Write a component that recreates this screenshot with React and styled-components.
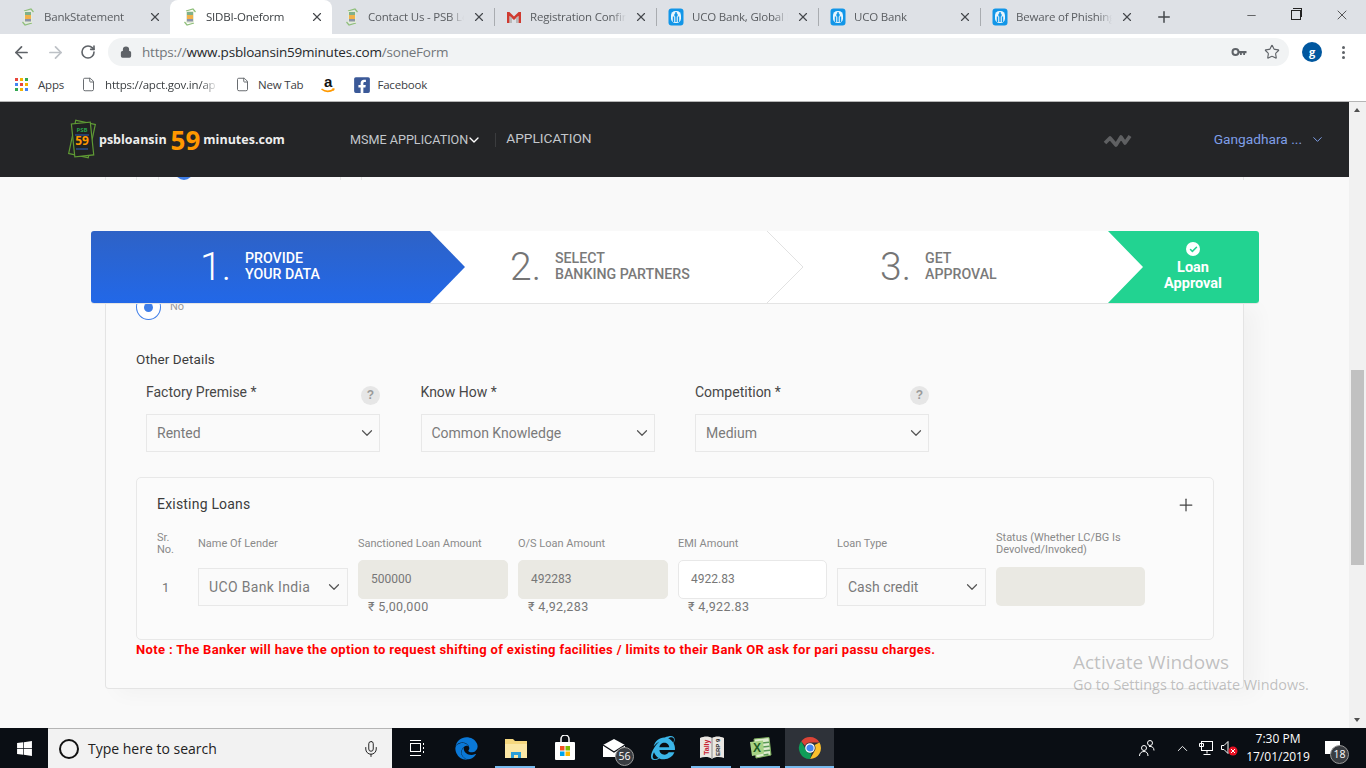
import React from 'react'
import styled, { createGlobalStyle } from 'styled-components'
import { ArrowLeft, ArrowRight, RotateCw, Lock, Star, X, Plus, Minus, ChevronDown, File, Mic, Check } from 'lucide-react'
import { FaWindows, FaFacebookSquare, FaEdge, FaInternetExplorer } from 'react-icons/fa'

const tabs = [
    { title: 'BankStatement', icon: 'psb' },
    { title: 'SIDBI-Oneform', icon: 'psb', active: true },
    { title: 'Contact Us - PSB Loans in 59', icon: 'psb' },
    { title: 'Registration Confirmation', icon: 'gmail', divider: true },
    { title: 'UCO Bank, Global Banking', icon: 'uco', divider: true },
    { title: 'UCO Bank', icon: 'uco', divider: true },
    { title: 'Beware of Phishing Attacks', icon: 'uco', divider: true },
]

const PsbIcon = () => (
    <svg width="16" height="18" viewBox="0 0 16 18">
        <path d="M4 3l7-2 2.500 3M12 15l-7 2-2.500-3" stroke="#8fbf7a" strokeWidth="1.200" fill="none" />
        <rect x="4" y="3" width="8" height="12" rx="1" fill="#e4ecd8" />
        <rect x="5" y="4" width="6" height="3" fill="#7fb08a" />
        <rect x="5" y="7" width="6" height="4" fill="#f2b14a" />
        <rect x="5" y="11" width="6" height="2.500" fill="#8b93a8" />
    </svg>
)

const GmailIcon = () => (
    <svg width="16" height="16" viewBox="0 0 16 16">
        <path d="M1 3h2.400L8 7.400 12.600 3H15v11h-2.600V7L8 11 3.600 7v7H1z" fill="#cf3a30" />
        <path d="M3.600 7v7H6V9z M12.400 7v7H10V9z" fill="#b9b9b9" />
    </svg>
)

const UcoIcon = () => (
    <svg width="16" height="18" viewBox="0 0 16 18">
        <rect x="0.500" y="0.500" width="15" height="17" rx="3" fill="#1296e8" />
        <rect x="3" y="3" width="10" height="12" rx="4.500" fill="#e9f6fd" />
        <path d="M8 4v10M5.500 14V8.500M10.500 14V8.500" stroke="#1296e8" strokeWidth="1.400" fill="none" />
        <circle cx="8" cy="7" r="1.800" fill="#1296e8" />
    </svg>
)

const tabIcons = { psb: <PsbIcon />, gmail: <GmailIcon />, uco: <UcoIcon /> }

const AppsIcon = () => {
    const colors = ['#e8453c', '#f4b400', '#34a853', '#4285f4', '#e8453c', '#f4b400', '#34a853', '#f4b400', '#4285f4']
    return (
        <svg width="13" height="13" viewBox="0 0 13 13">
            {colors.map((c, i) => (
                <rect key={i} x={(i % 3) * 5} y={Math.floor(i / 3) * 5} width="3" height="3" fill={c} />
            ))}
        </svg>
    )
}

const AmazonIcon = () => (
    <svg width="16" height="20" viewBox="0 0 16 20">
        <text x="8" y="12" textAnchor="middle" fontFamily="Liberation Sans" fontWeight="700" fontSize="15" fill="#111">a</text>
        <path d="M1.500 14c3.500 2.800 8.500 2.800 12.500.3" stroke="#f90" strokeWidth="1.600" fill="none" />
        <path d="M12 13.200l2.800.4-1 2.400z" fill="#f90" />
    </svg>
)

const KeyIcon = () => (
    <svg width="16" height="10" viewBox="0 0 16 10">
        <circle cx="4.500" cy="5" r="3" fill="none" stroke="#5f6368" strokeWidth="2" />
        <path d="M7 4h8.500v2.200H14V8h-1.800V6.200h-1.400V8H9V6.200H7z" fill="#5f6368" />
    </svg>
)

const Logo = () => (
    <svg width="30" height="46" viewBox="0 0 30 46">
        <rect x="5" y="5" width="20" height="34" fill="none" stroke="#5f9a34" strokeWidth="1.200" transform="rotate(12 15 22)" />
        <rect x="6" y="6" width="19" height="33" fill="#202122" stroke="#5f9a34" strokeWidth="1.200" transform="rotate(-6 15 22)" />
        <text x="15" y="15" textAnchor="middle" fontFamily="Open Sans" fontWeight="700" fontSize="6" fill="#2aa04a">PSB</text>
        <rect x="8" y="17" width="14" height="2" fill="#27406e" />
        <text x="15" y="28" textAnchor="middle" fontFamily="Open Sans" fontWeight="700" fontSize="12" fill="#ff9800">59</text>
        <rect x="9" y="31" width="12" height="2" fill="#27406e" />
    </svg>
)

const WaveIcon = () => (
    <svg width="30" height="16" viewBox="0 0 30 16">
        <path d="M2 11l5-5 6 7 5-8 4 6 5-7" stroke="#5f6062" strokeWidth="3.600" fill="none" strokeLinejoin="round" />
    </svg>
)

const ChromeLogo = () => (
    <svg width="24" height="24" viewBox="0 0 24 24">
        <path d="M12 1a11 11 0 0 1 9.500 5.500H12a5.500 5.500 0 0 0-5 3.200L3.200 5.300A11 11 0 0 1 12 1z" fill="#db4437" />
        <path d="M21.500 6.500A11 11 0 0 1 12 23l4.700-8.200a5.500 5.500 0 0 0-.1-5.800z" fill="#fbc02d" />
        <path d="M3.200 5.300L7.900 13.700a5.500 5.500 0 0 0 5.600 3.600L12 23A11 11 0 0 1 3.200 5.300z" fill="#0f9d58" />
        <circle cx="12" cy="12" r="4.200" fill="#4285f4" stroke="#fff" strokeWidth="1.200" />
    </svg>
)

const ExplorerIcon = () => (
    <svg width="24" height="22" viewBox="0 0 24 22">
        <path d="M1 2h8l2 2h12v17H1z" fill="#f5d77f" />
        <rect x="1" y="7" width="22" height="14" fill="#fbe7a6" />
        <path d="M7 21v-6h10v6h-3v-3h-4v3z" fill="#2b9fd9" />
    </svg>
)

const StoreIcon = () => (
    <svg width="22" height="26" viewBox="0 0 22 26">
        <path d="M7 7V4a4 4 0 0 1 8 0v3" stroke="#fff" strokeWidth="1.500" fill="none" />
        <rect x="1" y="7" width="20" height="18" rx="1" fill="#fff" />
        <rect x="6" y="11" width="4.500" height="4.500" fill="#f25022" />
        <rect x="11.500" y="11" width="4.500" height="4.500" fill="#7fba00" />
        <rect x="6" y="16.500" width="4.500" height="4.500" fill="#00a4ef" />
        <rect x="11.500" y="16.500" width="4.500" height="4.500" fill="#ffb900" />
    </svg>
)

const MailIcon = () => (
    <svg width="24" height="20" viewBox="0 0 24 20">
        <path d="M1 7l11-6 11 6v12H1z" fill="#fff" />
        <path d="M1 7l11 7 11-7" stroke="#0a0e14" strokeWidth="1.300" fill="none" />
    </svg>
)

const TallyIcon = () => (
    <svg width="26" height="26" viewBox="0 0 26 26">
        <path d="M1 3c4-2 9-2 12 0 3-2 8-2 12 0v20c-4-1.500-9-1.500-12 1-3-2.500-8-2.500-12-1z" fill="#e9e6e2" />
        <path d="M13 3v21" stroke="#8a8a8a" />
        <text transform="translate(9.500 20) rotate(-90)" fontFamily="Liberation Sans" fontWeight="700" fontSize="7" fill="#c8202f">Tally</text>
        <text transform="translate(20.500 21) rotate(-90)" fontFamily="Liberation Sans" fontWeight="700" fontSize="6" fill="#222">ERP 9</text>
    </svg>
)

const ExcelIcon = () => (
    <svg width="24" height="24" viewBox="0 0 24 24">
        <path d="M5 3l15-1.500 2 17.500-15 3z" fill="#dfeccf" stroke="#7cae5c" />
        <path d="M13 7l7-.7M13.500 11l7-.7M14 15l7-.7M14.500 19l5-.7" stroke="#5a9a57" strokeWidth="1.500" />
        <path d="M1 6l13-1.500 1 13L3 20z" fill="#a6d285" />
        <text x="8" y="16" textAnchor="middle" fontFamily="Liberation Sans" fontWeight="700" fontSize="12" fill="#1d5c24">X</text>
    </svg>
)

const TaskViewIcon = () => (
    <svg width="16" height="18" viewBox="0 0 16 18" fill="none" stroke="#fff" strokeWidth="1">
        <rect x="1.500" y="4.500" width="10" height="8" />
        <path d="M1 1.500h11M1 16.500h11M14.500 4v2M14.500 8v2M14.500 12v2" />
    </svg>
)

const PeopleIcon = () => (
    <svg width="18" height="18" viewBox="0 0 18 18" fill="none" stroke="#fff" strokeWidth="1">
        <circle cx="6" cy="9" r="2.500" />
        <path d="M1.500 17c0-3 2-4.500 4.500-4.500s4 1.500 4 4.500" />
        <circle cx="12" cy="4" r="2.500" />
        <path d="M11 7.500c3-.5 5 1 5 4" />
    </svg>
)

const NetworkIcon = () => (
    <svg width="16" height="16" viewBox="0 0 16 16" fill="none" stroke="#fff" strokeWidth="1">
        <rect x="3.500" y="1.500" width="11" height="9" />
        <path d="M9 10.500v3M5.500 14.500h7M1.500 3.500h4v3h-4z" />
    </svg>
)

const VolumeIcon = () => (
    <svg width="20" height="18" viewBox="0 0 20 18">
        <path d="M1.500 6.500h2.500l4-4v12l-4-4H1.500z" fill="none" stroke="#fff" />
        <circle cx="13" cy="12" r="4.500" fill="#e81123" />
        <path d="M11 10l4 4M15 10l-4 4" stroke="#fff" />
    </svg>
)

const Select = ({ value, compact, wide }) => (
    <SelectBox $compact={compact} $wide={wide}>
        <span>{value}</span>
        <ChevronDown size={18} strokeWidth={1.6} color="#555" />
    </SelectBox>
)

const Field = ({ label, value, help }) => (
    <div>
        <FieldHead>
            <FieldLabel>{label}</FieldLabel>
            {help && <HelpBadge>?</HelpBadge>}
        </FieldHead>
        <Select value={value} />
    </div>
)

const Step = ({ num, top, bottom, active, width, pad, arrow }) => (
    <StepBox $active={active} $width={width} $pad={pad}>
        <StepNum>{num}.</StepNum>
        <StepLabel $active={active}>{top}<br />{bottom}</StepLabel>
        {arrow && (
            <StepArrow width="38" height="72" viewBox="0 0 38 72">
                <path d="M1 0l36 36L1 72" fill="none" stroke="#e2e2e2" />
            </StepArrow>
        )}
    </StepBox>
)

const App = () => {
    return (
        <Screen>
            <GlobalStyle />
            <TabStrip>
                {tabs.map((tab) => (
                    <Tab key={tab.title} $active={tab.active} $divider={tab.divider}>
                        <TabIcon>{tabIcons[tab.icon]}</TabIcon>
                        <TabTitle>{tab.title}</TabTitle>
                        <X size={14} strokeWidth={2} color="#45484c" />
                    </Tab>
                ))}
                <NewTab><Plus size={18} strokeWidth={2} /></NewTab>
                <WindowControls>
                    <Minus size={13} strokeWidth={1.2} />
                    <RestoreIcon />
                    <X size={16} strokeWidth={1.1} />
                </WindowControls>
            </TabStrip>

            <Toolbar>
                <NavIcons>
                    <ArrowLeft size={19} color="#5f6368" strokeWidth={2.2} />
                    <ArrowRight size={19} color="#bdc1c6" strokeWidth={2.2} />
                    <RotateCw size={16} color="#5f6368" strokeWidth={2.4} />
                </NavIcons>
                <Omnibox>
                    <Lock size={12} color="#5f6368" fill="#5f6368" strokeWidth={2.5} />
                    <Url>https://<b>www.psbloansin59minutes.com</b>/soneForm</Url>
                    <OmniRight>
                        <KeyIcon />
                        <Star size={16} color="#5f6368" strokeWidth={1.7} />
                    </OmniRight>
                </Omnibox>
                <Avatar>g</Avatar>
                <MenuDots><i /><i /><i /></MenuDots>
            </Toolbar>

            <Bookmarks>
                <Bookmark $gap={10}><AppsIcon />Apps</Bookmark>
                <Bookmark $gap={9}><File size={15} strokeWidth={1.5} color="#5f6368" /><FadeText>https://apct.gov.in/ap</FadeText></Bookmark>
                <Bookmark $gap={8}><File size={15} strokeWidth={1.5} color="#5f6368" />New Tab</Bookmark>
                <Bookmark $gap={0}><AmazonIcon /></Bookmark>
                <Bookmark $gap={6}><FaFacebookSquare size={18} color="#3b5998" />Facebook</Bookmark>
            </Bookmarks>

            <Viewport>
                <Page>
                    <SiteHeader>
                        <Brand>
                            <Logo />
                            <BrandText>psbloansin</BrandText>
                            <BrandNum>59</BrandNum>
                            <BrandText>minutes.com</BrandText>
                        </Brand>
                        <NavItem>MSME APPLICATION</NavItem>
                        <NavChevron><ChevronDown size={16} color="#fff" strokeWidth={2} /></NavChevron>
                        <NavDivider />
                        <NavItem $large>APPLICATION</NavItem>
                        <HeaderRight>
                            <WaveIcon />
                            <UserName>Gangadhara ...</UserName>
                            <ChevronDown size={15} color="#7f9fe8" strokeWidth={1.6} />
                        </HeaderRight>
                    </SiteHeader>

                    <ScrolledEdge><EdgeDot /></ScrolledEdge>

                    <Stepper>
                        <Step num="1" top="PROVIDE" bottom="YOUR DATA" active width={374} pad={109} />
                        <Step num="2" top="SELECT" bottom="BANKING PARTNERS" width={338} pad={45} arrow />
                        <Step num="3" top="GET" bottom="APPROVAL" width={340} pad={77} />
                        <ApprovalStep>
                            <CheckDot><Check size={9} strokeWidth={4} color="#22d391" /></CheckDot>
                            <span>Loan<br />Approval</span>
                        </ApprovalStep>
                    </Stepper>

                    <Card>
                        <RadioRow>
                            <RadioOuter><RadioDot /></RadioOuter>
                            <RadioText>No</RadioText>
                        </RadioRow>
                        <SectionTitle>Other Details</SectionTitle>
                        <FieldGrid>
                            <Field label="Factory Premise *" value="Rented" help />
                            <Field label="Know How *" value="Common Knowledge" />
                            <Field label="Competition *" value="Medium" help />
                        </FieldGrid>

                        <LoansBox>
                            <LoansHead>
                                <LoansTitle>Existing Loans</LoansTitle>
                                <Plus size={20} strokeWidth={1.5} color="#444" />
                            </LoansHead>
                            <LoansGrid>
                                <ColHead>Sr.<br />No.</ColHead>
                                <ColHead>Name Of Lender</ColHead>
                                <ColHead>Sanctioned Loan Amount</ColHead>
                                <ColHead>O/S Loan Amount</ColHead>
                                <ColHead>EMI Amount</ColHead>
                                <ColHead>Loan Type</ColHead>
                                <ColHead>Status (Whether LC/BG Is Devolved/Invoked)</ColHead>

                                <SrNo>1</SrNo>
                                <SelectCell><Select value="UCO Bank India" compact wide /></SelectCell>
                                <div>
                                    <AmountInput $locked>500000</AmountInput>
                                    <AmountHint>₹ 5,00,000</AmountHint>
                                </div>
                                <div>
                                    <AmountInput $locked>492283</AmountInput>
                                    <AmountHint>₹ 4,92,283</AmountHint>
                                </div>
                                <div>
                                    <AmountInput>4922.83</AmountInput>
                                    <AmountHint>₹ 4,922.83</AmountHint>
                                </div>
                                <SelectCell><Select value="Cash credit" compact /></SelectCell>
                                <SelectCell><StatusInput /></SelectCell>
                            </LoansGrid>
                        </LoansBox>
                        <Note>Note : The Banker will have the option to request shifting of existing facilities / limits to their Bank OR ask for pari passu charges.</Note>
                    </Card>
                </Page>

                <Scrollbar>
                    <ScrollArrow $up />
                    <ScrollThumb />
                    <ScrollArrow />
                </Scrollbar>

                <Watermark>
                    <strong>Activate Windows</strong>
                    <span>Go to Settings to activate Windows.</span>
                </Watermark>
            </Viewport>

            <Taskbar>
                <StartButton><FaWindows size={17} color="#fff" /></StartButton>
                <SearchBox>
                    <Cortana />
                    <SearchText>Type here to search</SearchText>
                    <Mic size={18} strokeWidth={1.3} color="#222" />
                </SearchBox>
                <TaskIcons>
                    <TaskIcon $first><TaskViewIcon /></TaskIcon>
                    <TaskIcon><FaEdge size={23} color="#0a78d7" /></TaskIcon>
                    <TaskIcon $open><ExplorerIcon /></TaskIcon>
                    <TaskIcon><StoreIcon /></TaskIcon>
                    <TaskIcon><MailIcon /><CountBadge>56</CountBadge></TaskIcon>
                    <TaskIcon><FaInternetExplorer size={24} color="#3bb5e8" /></TaskIcon>
                    <TaskIcon $open><TallyIcon /></TaskIcon>
                    <TaskIcon $open><ExcelIcon /></TaskIcon>
                    <TaskIcon $open $current><ChromeLogo /></TaskIcon>
                </TaskIcons>
                <Tray>
                    <PeopleIcon />
                    <TrayCaret><ChevronDown size={17} color="#fff" strokeWidth={1.3} /></TrayCaret>
                    <TrayPair>
                        <NetworkIcon />
                        <VolumeIcon />
                    </TrayPair>
                    <Clock>7:30 PM<br />17/01/2019</Clock>
                    <Notify>
                        <NotifyGlyph />
                        <CountBadge $tray>18</CountBadge>
                    </Notify>
                </Tray>
            </Taskbar>
        </Screen>
    )
}

const GlobalStyle = createGlobalStyle`
    html, body {
        margin: 0;
        padding: 0;
        overflow: hidden;
    }
    * {
        box-sizing: border-box;
    }
`

const Screen = styled.div`
    width: 1366px;
    height: 768px;
    display: flex;
    flex-direction: column;
    overflow: hidden;
    font-family: 'Roboto', 'Liberation Sans', sans-serif;
    background: #fff;
`

const TabStrip = styled.div`
    height: 34px;
    flex: none;
    display: flex;
    padding-left: 8px;
    background: #dee1e6;
`

const Tab = styled.div`
    width: 162px;
    display: flex;
    align-items: center;
    padding: 0 8px 0 12px;
    color: ${(p) => (p.$active ? '#3c4043' : '#5a5d61')};
    background: ${(p) => (p.$active ? '#fff' : 'transparent')};
    border-radius: ${(p) => (p.$active ? '8px 8px 0 0' : '0')};
    position: relative;

    &::before {
        content: '';
        display: ${(p) => (p.$divider ? 'block' : 'none')};
        position: absolute;
        left: 0;
        top: 8px;
        bottom: 8px;
        width: 1px;
        background: #a9acb0;
    }
`

const TabIcon = styled.span`
    width: 16px;
    height: 18px;
    flex: none;
    margin-right: 8px;
    display: flex;
    align-items: center;
`

const TabTitle = styled.span`
    flex: 1;
    min-width: 0;
    margin: -2px 8px 0 0;
    font: 11.500px 'Open Sans', sans-serif;
    letter-spacing: -0.2px;
    white-space: nowrap;
    overflow: hidden;
    -webkit-mask-image: linear-gradient(to right, #000 85%, transparent 100%);
    mask-image: linear-gradient(to right, #000 85%, transparent 100%);
`

const NewTab = styled.div`
    width: 44px;
    display: flex;
    align-items: center;
    justify-content: center;
    color: #45484c;
`

const WindowControls = styled.div`
    margin-left: auto;
    width: 138px;
    height: 30px;
    display: flex;
    align-items: center;
    justify-content: space-around;
    color: #222;
`

const RestoreIcon = styled.span`
    width: 10px;
    height: 10px;
    border: 1px solid #222;
    position: relative;
    &::after {
        content: '';
        position: absolute;
        left: 1px;
        top: -3px;
        width: 8px;
        height: 8px;
        border: 1px solid #222;
        border-left: 0;
        border-bottom: 0;
    }
`

const Toolbar = styled.div`
    height: 34px;
    flex: none;
    display: flex;
    align-items: center;
    background: #fff;
    padding-top: 2px;
`

const NavIcons = styled.div`
    width: 108px;
    padding: 0 12px;
    display: flex;
    align-items: center;
    justify-content: space-between;
`

const Omnibox = styled.div`
    width: 1181px;
    height: 28px;
    display: flex;
    align-items: center;
    padding-left: 12px;
    background: #f1f3f4;
    border-radius: 14px;
`

const Url = styled.div`
    margin-left: 10px;
    font: 13.500px 'Open Sans', sans-serif;
    letter-spacing: -0.2px;
    color: #72767a;

    b {
        font-weight: 400;
        color: #26282b;
    }
`

const OmniRight = styled.div`
    margin-left: auto;
    width: 49px;
    margin-right: 9px;
    display: flex;
    align-items: center;
    justify-content: space-between;
`

const Avatar = styled.div`
    width: 20px;
    height: 20px;
    margin-left: 13px;
    border-radius: 50%;
    background: #00579f;
    color: #fff;
    font: 700 11px/19px 'Open Sans', sans-serif;
    text-align: center;
`

const MenuDots = styled.div`
    margin-left: 20px;
    display: flex;
    flex-direction: column;
    gap: 2px;

    i {
        width: 3px;
        height: 3px;
        border-radius: 50%;
        background: #5f6368;
    }
`

const Bookmarks = styled.div`
    height: 34px;
    flex: none;
    display: flex;
    align-items: center;
    padding-left: 15px;
    background: #fff;
    border-bottom: 1px solid #b5b5b5;
    gap: 17px;
`

const Bookmark = styled.div`
    display: flex;
    align-items: center;
    gap: ${(p) => p.$gap}px;
    font: 11.500px 'Open Sans', sans-serif;
    letter-spacing: -0.2px;
    color: #3c4043;
`

const FadeText = styled.span`
    width: 113px;
    white-space: nowrap;
    overflow: hidden;
    -webkit-mask-image: linear-gradient(to right, #000 85%, transparent 100%);
    mask-image: linear-gradient(to right, #000 85%, transparent 100%);
`

const Viewport = styled.div`
    flex: 1;
    min-height: 0;
    display: flex;
    position: relative;
    background: #f9f9f9;
`

const Page = styled.div`
    flex: 1;
    min-width: 0;
    overflow: hidden;
`

const SiteHeader = styled.div`
    height: 75px;
    display: flex;
    align-items: center;
    padding: 0 24px 0 67px;
    background: #242527;
`

const Brand = styled.div`
    width: 283px;
    display: flex;
    align-items: center;
`

const BrandText = styled.span`
    font: 700 12.500px 'Open Sans', sans-serif;
    color: #eee;
    margin-left: 2px;
`

const BrandNum = styled.span`
    font: 700 26px 'Open Sans', sans-serif;
    color: #ff9800;
    margin: 0 1px 0 4px;
`

const NavItem = styled.span`
    font-size: ${(p) => (p.$large ? '13.700px' : '12.600px')};
    color: #c3c7cc;
    white-space: nowrap;
    margin-top: ${(p) => (p.$large ? '-3px' : '0')};
`

const NavChevron = styled.span`
    display: flex;
    margin: 1px 0 0 -2px;
`

const NavDivider = styled.span`
    width: 1px;
    height: 14px;
    margin: 0 10px 0 13px;
    background: #3b3c3e;
`

const HeaderRight = styled.div`
    margin-left: auto;
    display: flex;
    align-items: center;
`

const UserName = styled.span`
    margin: -2px 8px 0 81px;
    font-size: 13.700px;
    color: #7f9fe8;
`

const ScrolledEdge = styled.div`
    height: 3px;
    margin-left: 105px;
    width: 1139px;
    position: relative;
    overflow: hidden;
    border-left: 1px solid #e6e6e6;
    border-right: 1px solid #e6e6e6;
    background:
        linear-gradient(#e6e6e6, #e6e6e6) 30px 0 / 1px 100% no-repeat,
        linear-gradient(#e6e6e6, #e6e6e6) 52px 0 / 1px 100% no-repeat,
        linear-gradient(#e6e6e6, #e6e6e6) 234px 0 / 1px 100% no-repeat,
        linear-gradient(#e6e6e6, #e6e6e6) 255px 0 / 1px 100% no-repeat;
`

const EdgeDot = styled.span`
    position: absolute;
    left: 69px;
    top: -9px;
    width: 18px;
    height: 12px;
    border-radius: 0 0 9px 9px;
    background: #3f7ee8;
`

const Stepper = styled.div`
    position: relative;
    z-index: 2;
    width: 1168px;
    height: 72px;
    margin: 51px 0 0 91px;
    display: flex;
    background: #fff;
    border-radius: 3px;
    box-shadow: 0 1px 0 #e4e4e4;
`

const StepBox = styled.div`
    flex: none;
    width: ${(p) => p.$width}px;
    height: 72px;
    display: flex;
    align-items: center;
    gap: 14px;
    padding-left: ${(p) => p.$pad}px;
    position: relative;
    border-radius: ${(p) => (p.$active ? '3px 0 0 3px' : '0')};
    color: ${(p) => (p.$active ? '#fff' : '#757575')};
    background: ${(p) => (p.$active ? 'linear-gradient(#2e62c6, #2268e8)' : 'transparent')};
    clip-path: ${(p) => (p.$active ? 'polygon(0 0, 339px 0, 100% 50%, 339px 100%, 0 100%)' : 'none')};
`

const StepNum = styled.span`
    font-size: 39px;
    font-weight: 300;
    line-height: 1;
`

const StepLabel = styled.span`
    margin-top: -2px;
    font-size: 14.200px;
    font-weight: 500;
    line-height: 16px;
    color: ${(p) => (p.$active ? '#fff' : '#7a7a7a')};
`

const StepArrow = styled.svg`
    position: absolute;
    right: -1px;
    top: 0;
`

const ApprovalStep = styled.div`
    flex: none;
    width: 151px;
    height: 72px;
    margin-left: -35px;
    padding: 11px 0 0 19px;
    display: flex;
    flex-direction: column;
    align-items: center;
    background: #22d391;
    border-radius: 0 3px 3px 0;
    clip-path: polygon(0 0, 100% 0, 100% 100%, 0 100%, 35px 50%);
    color: #fff;
    font-size: 14.500px;
    font-weight: 700;
    line-height: 16px;
    text-align: center;
`

const CheckDot = styled.span`
    width: 14px;
    height: 14px;
    margin-bottom: 4px;
    border-radius: 50%;
    background: #fff;
    display: flex;
    align-items: center;
    justify-content: center;
`

const Card = styled.div`
    display: flow-root;
    width: 1139px;
    height: 386px;
    margin-left: 105px;
    padding: 0 29px 0 30px;
    background: #fafafa;
    border: 1px solid #e4e4e4;
    border-top: 0;
    border-radius: 0 0 4px 4px;
    box-shadow: 12px 4px 22px rgba(0, 0, 0, 0.035);
`

const RadioRow = styled.div`
    display: flex;
    align-items: center;
    gap: 9px;
    margin-top: -9px;
`

const RadioOuter = styled.span`
    width: 25px;
    height: 26px;
    border-radius: 50%;
    border: 1px solid #3f7ee8;
    background: #fff;
    display: flex;
    align-items: center;
    justify-content: center;
`

const RadioDot = styled.span`
    width: 9px;
    height: 9px;
    border-radius: 50%;
    background: #3f7ee8;
`

const RadioText = styled.span`
    font-size: 11px;
    color: #9a9a9a;
    margin-top: -2px;
`

const SectionTitle = styled.div`
    margin-top: 30px;
    font-size: 13.500px;
    line-height: 18px;
    letter-spacing: 0.1px;
    color: #3c3c3c;
`

const FieldGrid = styled.div`
    margin-top: 13px;
    padding-left: 10px;
    display: grid;
    grid-template-columns: repeat(3, 234px);
    column-gap: 40.500px;
`

const FieldHead = styled.div`
    height: 33px;
    display: flex;
    justify-content: space-between;
    align-items: flex-start;
`

const FieldLabel = styled.span`
    font-size: 14px;
    line-height: 22px;
    color: #474747;
`

const HelpBadge = styled.span`
    width: 19px;
    height: 19px;
    margin-top: 5px;
    border-radius: 50%;
    background: #e6e6e6;
    color: #9a9a9a;
    font: 700 12px/19px 'Liberation Sans', sans-serif;
    text-align: center;
`

const SelectBox = styled.div`
    height: 38px;
    display: flex;
    align-items: center;
    justify-content: space-between;
    padding: ${(p) => (p.$compact ? '0 4px 0 10px' : '0 3px 0 10px')};
    border: 1px solid #e8e8e8;
    font-size: 14px;
    letter-spacing: ${(p) => (p.$wide ? '0.35px' : '0')};
    color: #7a7a7a;
    background: #fafafa;
`

const LoansBox = styled.div`
    height: 163px;
    margin-top: 25px;
    padding: 16px 20px 0;
    background: #fbfbfb;
    border: 1px solid #e8e8e8;
    border-radius: 5px;
`

const LoansHead = styled.div`
    display: flex;
    justify-content: space-between;
    align-items: center;
    height: 20px;
    margin-right: -3px;

    svg {
        margin-top: 2px;
    }
`

const LoansTitle = styled.span`
    font-size: 14px;
    letter-spacing: 0.2px;
    color: #3c3c3c;
`

const LoansGrid = styled.div`
    margin-top: 18px;
    display: grid;
    grid-template-columns: 31px 150px 150px 150px 149px 149px 149px;
    grid-template-rows: 24px auto;
    column-gap: 10px;
    row-gap: 4px;
`

const ColHead = styled.div`
    align-self: center;
    font-size: 11px;
    line-height: 12px;
    color: #8a8a8a;
`

const SrNo = styled.div`
    padding: 20px 0 0 5px;
    font-size: 13px;
    color: #777;
`

const SelectCell = styled.div`
    padding-top: 8px;
`

const AmountInput = styled.div`
    height: 39px;
    padding-left: 12px;
    border-radius: 5px;
    font-size: 12px;
    line-height: 36px;
    color: #777;
    background: ${(p) => (p.$locked ? '#eae9e3' : '#fff')};
    border: 1px solid ${(p) => (p.$locked ? '#eae9e3' : '#e8e8e8')};
`

const AmountHint = styled.div`
    padding-left: 10px;
    font-size: 12.500px;
    line-height: 16px;
    letter-spacing: 0.4px;
    color: #777;
`

const StatusInput = styled.div`
    height: 39px;
    margin-top: -1px;
    border-radius: 5px;
    background: #eae9e3;
`

const Note = styled.div`
    margin-top: 1px;
    font-size: 13px;
    font-weight: 700;
    line-height: 18px;
    letter-spacing: 0.345px;
    white-space: nowrap;
    color: #fe0000;
`

const Scrollbar = styled.div`
    width: 17px;
    flex: none;
    background: #f1f1f1;
    position: relative;
`

const ScrollThumb = styled.div`
    position: absolute;
    left: 2px;
    top: 268px;
    width: 13px;
    height: 195px;
    background: #c1c1c1;
`

const ScrollArrow = styled.div`
    position: absolute;
    left: 5px;
    ${(p) => (p.$up ? 'top: 6px;' : 'bottom: 6px;')}
    border-left: 3.500px solid transparent;
    border-right: 3.500px solid transparent;
    ${(p) => (p.$up ? 'border-bottom: 4px solid #505050;' : 'border-top: 4px solid #505050;')}
`

const Watermark = styled.div`
    position: absolute;
    left: 1073px;
    top: 547px;
    display: flex;
    flex-direction: column;
    font-family: 'Open Sans', sans-serif;
    color: rgba(120, 120, 120, 0.45);
    white-space: nowrap;

    strong {
        font-size: 19px;
        font-weight: 400;
        line-height: 26px;
    }
    span {
        font-size: 14.400px;
        line-height: 20px;
    }
`

const Taskbar = styled.div`
    height: 40px;
    flex: none;
    display: flex;
    background: #0a0e14;
`

const StartButton = styled.div`
    width: 48px;
    display: flex;
    align-items: center;
    justify-content: center;
`

const SearchBox = styled.div`
    width: 344px;
    display: flex;
    align-items: center;
    padding: 0 12px 0 11px;
    background: #f2f2f2;
    border-top: 1px solid #b5b5b5;
`

const Cortana = styled.span`
    width: 20px;
    height: 20px;
    border-radius: 50%;
    border: 2.500px solid #111;
`

const SearchText = styled.span`
    flex: 1;
    margin-left: 9px;
    font: 14px 'Open Sans', sans-serif;
    color: #222;
`

const TaskIcons = styled.div`
    display: flex;
`

const TaskIcon = styled.div`
    width: ${(p) => (p.$first ? '50px' : '49px')};
    height: 40px;
    padding-right: ${(p) => (p.$first ? '1px' : '0')};
    display: flex;
    align-items: center;
    justify-content: center;
    position: relative;
    background: ${(p) => (p.$current ? '#2e3239' : 'transparent')};

    &::after {
        content: '';
        display: ${(p) => (p.$open ? 'block' : 'none')};
        position: absolute;
        left: ${(p) => (p.$current ? '0' : '4px')};
        right: ${(p) => (p.$current ? '0' : '5px')};
        bottom: 0;
        height: 2px;
        background: #76b9ed;
    }
`

const CountBadge = styled.span`
    position: absolute;
    left: ${(p) => (p.$tray ? '6px' : '26px')};
    top: ${(p) => (p.$tray ? '17px' : '19px')};
    width: 19px;
    height: 19px;
    border-radius: 50%;
    border: 1px solid #999;
    background: #3a3d42;
    color: #fff;
    font: 10.500px/17px 'Open Sans', sans-serif;
    text-align: center;
`

const Tray = styled.div`
    margin-left: auto;
    display: flex;
    align-items: center;
    padding-right: 18px;
`

const TrayCaret = styled.span`
    display: flex;
    margin-left: 18px;
    transform: rotate(180deg);
`

const TrayPair = styled.div`
    display: flex;
    align-items: center;
    gap: 6px;
    margin-left: 7px;
`

const Clock = styled.div`
    width: 72px;
    margin: 0 10px 0 2px;
    font: 12px/18px 'Open Sans', sans-serif;
    color: #fff;
    text-align: center;
    white-space: nowrap;
`

const Notify = styled.div`
    width: 24px;
    height: 40px;
    position: relative;
`

const NotifyGlyph = styled.span`
    position: absolute;
    left: 1px;
    top: 13px;
    width: 15px;
    height: 13px;
    background: #fff;
`

export default App
